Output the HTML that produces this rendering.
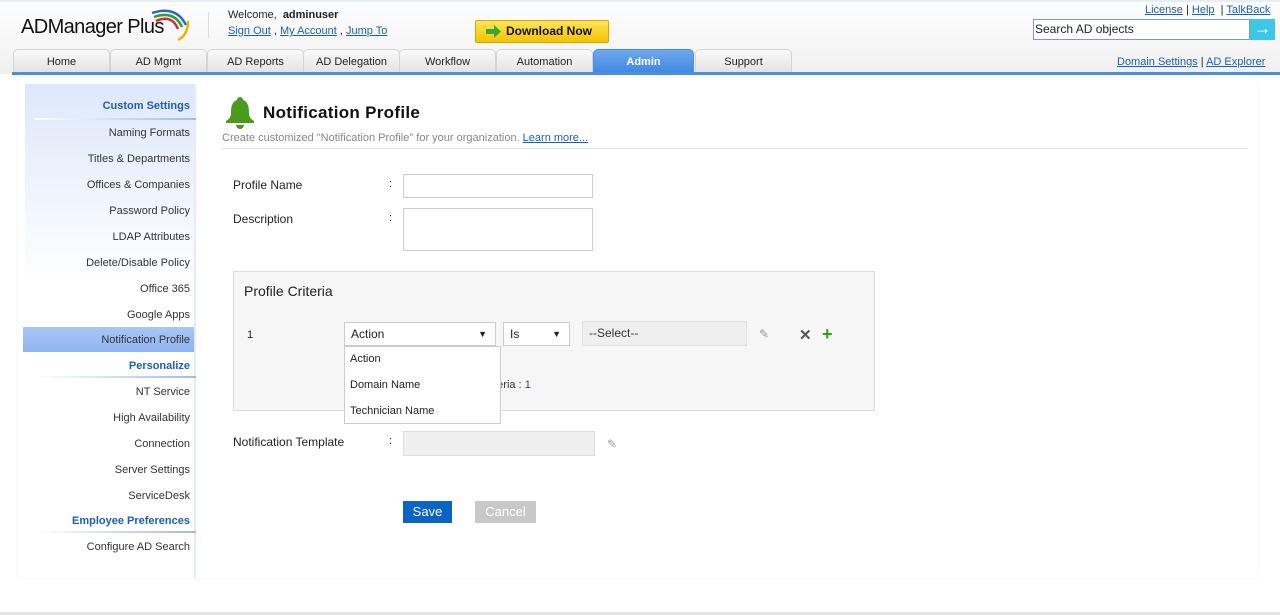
<!DOCTYPE html>
<html><head><meta charset="utf-8"><style>
*{margin:0;padding:0;box-sizing:border-box}
body{width:1280px;height:615px;overflow:hidden;background:#fff;font-family:"Liberation Sans",sans-serif;font-size:11px;color:#222;position:relative}
.a{position:absolute}
a{color:#1a5fb4;text-decoration:underline}
.hdr{left:0;top:0;width:1280px;height:74px;background:linear-gradient(#fff,#f0f0f0)}
.tab{position:absolute;top:49px;height:24px;width:97px;border:1px solid #d4d4d4;border-bottom:none;border-radius:5px 5px 0 0;background:linear-gradient(#fafafa,#e2e2e2);text-align:center;line-height:24px;font-size:11px;color:#222}
.side div{position:absolute;right:0;width:171px;text-align:right;padding-right:4px;font-size:11px;color:#333}
.side .h{color:#1f5fae;font-weight:bold}
.inp{position:absolute;border:1px solid #ccc;background:#fff}
</style></head><body>
<div class="a hdr"></div>
<div class="a" style="left:0;top:0;width:1280px;height:2px;background:#e8eef6"></div>
<div class="a" style="left:21px;top:16px;font-size:20px;color:#111;letter-spacing:-0.6px">ADManager Plus</div>
<svg class="a" style="left:146px;top:5px" width="46" height="38"><path d="M6 8 Q30 0 40 20" stroke="#2a66c9" stroke-width="2.5" fill="none"/><path d="M8 12 Q28 5 36 22" stroke="#2f9e3a" stroke-width="2.5" fill="none"/><path d="M10 16 Q26 9 32 24" stroke="#d32f2f" stroke-width="2.5" fill="none"/><path d="M42 16 Q42 30 32 35" stroke="#e8b400" stroke-width="2.5" fill="none"/></svg>
<div class="a" style="left:208px;top:12px;width:1px;height:26px;background:#ddd"></div>
<div class="a" style="left:228px;top:9px;font-size:11px">Welcome, &nbsp;<b>adminuser</b></div>
<div class="a" style="left:228px;top:25px;font-size:11px"><a>Sign Out</a> , <a>My Account</a> , <a>Jump To</a></div>
<div class="a" style="left:475px;top:20px;width:134px;height:23px;border:1px solid #d9a800;border-radius:2px;background:linear-gradient(#ffe45c,#f4c400);font-weight:bold;font-size:12px;line-height:21px;padding-left:30px;color:#111">Download Now</div>
<svg class="a" style="left:486px;top:25px" width="16" height="13"><path d="M0 4h8V0l7 6.5-7 6.5V9H0z" fill="#3aa635"/></svg>
<div class="a" style="left:1145px;top:4px;font-size:11px"><a>License</a> | <a>Help</a> &nbsp;| <a>TalkBack</a></div>
<div class="a" style="left:1033px;top:19px;width:217px;height:21px;border:1px solid #7a9bc9;background:#fff;font-size:12px;line-height:19px;padding-left:1px">Search AD objects</div>
<div class="a" style="left:1250px;top:19px;width:25px;height:21px;background:#3cc7e6;color:#fff;font-size:18px;line-height:19px;text-align:center">→</div>
<div class="tab" style="left:13px">Home</div>
<div class="tab" style="left:110px">AD Mgmt</div>
<div class="tab" style="left:207px">AD Reports</div>
<div class="tab" style="left:303px">AD Delegation</div>
<div class="tab" style="left:399px">Workflow</div>
<div class="tab" style="left:496px">Automation</div>
<div class="tab" style="left:593px;width:101px;background:linear-gradient(#6fa8ee,#3f87e0);color:#fff;font-weight:bold;border-color:#4a8ee0">Admin</div>
<div class="tab" style="left:695px">Support</div>
<div class="a" style="left:1117px;top:56px;font-size:11px"><a>Domain Settings</a> | <a>AD Explorer</a></div>
<div class="a" style="left:12px;top:72px;width:1268px;height:3px;background:#4a8ee0"></div>
<div class="a" style="left:18px;top:78px;width:1240px;height:500px;border-radius:6px;box-shadow:0 0 3px #eee"></div>
<div class="a side" style="left:25px;top:84px;width:171px;height:494px;background:linear-gradient(#dde8fb,#fff 200px);border-right:2px solid #e3ecf9">
<div class="h" style="top:16px">Custom Settings</div>
<div style="left:10px;top:34px;width:161px;height:2px;background:linear-gradient(90deg,#fff,#9cbde8);padding:0"></div>
<div style="top:43px">Naming Formats</div><div style="top:69px">Titles &amp; Departments</div><div style="top:95px">Offices &amp; Companies</div><div style="top:121px">Password Policy</div><div style="top:147px">LDAP Attributes</div><div style="top:173px">Delete/Disable Policy</div><div style="top:199px">Office 365</div><div style="top:225px">Google Apps</div>
<div style="top:243px;height:25px;line-height:26px;background:linear-gradient(#a9c6f5,#8fb4f0)">Notification Profile</div>
<div class="h" style="top:276px">Personalize</div>
<div style="left:10px;top:292px;width:161px;height:2px;background:linear-gradient(90deg,#fff,#9cbde8);padding:0"></div>
<div style="top:302px">NT Service</div><div style="top:328px">High Availability</div><div style="top:354px">Connection</div><div style="top:380px">Server Settings</div><div style="top:406px">ServiceDesk</div>
<div class="h" style="top:431px">Employee Preferences</div>
<div style="left:10px;top:447px;width:161px;height:2px;background:linear-gradient(90deg,#fff,#9cbde8);padding:0"></div>
<div style="top:457px">Configure AD Search</div>
</div>
<svg class="a" style="left:223px;top:95px" width="34" height="34"><path d="M17 2a3 3 0 0 1 3 3c6 2 6 9 6 14 0 3 2 5 5 7v2H3v-2c3-2 5-4 5-7 0-5 0-12 6-14a3 3 0 0 1 3-3z" fill="#4a9a1c"/><path d="M13 30a4 4 0 0 0 8 0z" fill="#4a9a1c"/></svg>
<div class="a" style="left:263px;top:103px;font-size:17px;font-weight:bold;color:#111;letter-spacing:0.3px">Notification Profile</div>
<div class="a" style="left:222px;top:132px;font-size:11px;color:#888">Create customized "Notification Profile" for your organization. <a>Learn more...</a></div>
<div class="a" style="left:222px;top:148px;width:1026px;height:1px;background:#e5e5e5"></div>
<div class="a" style="left:233px;top:178px;font-size:12px">Profile Name</div><div class="a" style="left:389px;top:178px">:</div>
<div class="inp" style="left:403px;top:174px;width:190px;height:24px"></div>
<div class="a" style="left:233px;top:212px;font-size:12px">Description</div><div class="a" style="left:389px;top:212px">:</div>
<div class="inp" style="left:403px;top:208px;width:190px;height:43px"></div>
<div class="a" style="left:233px;top:271px;width:642px;height:140px;background:#f6f6f6;border:1px solid #ddd"></div>
<div class="a" style="left:244px;top:283px;font-size:14px;color:#222">Profile Criteria</div>
<div class="a" style="left:247px;top:329px;font-size:11px">1</div>
<div class="inp" style="left:344px;top:322px;width:152px;height:24px;font-size:12px;line-height:22px;padding-left:6px">Action<span style="position:absolute;right:8px;font-size:9px">▼</span></div>
<div class="inp" style="left:503px;top:322px;width:67px;height:24px;font-size:12px;line-height:22px;padding-left:6px">Is<span style="position:absolute;right:8px;font-size:9px">▼</span></div>
<div class="a" style="left:582px;top:321px;width:165px;height:25px;background:#efefef;border:1px solid #e0e0e0;font-size:12px;line-height:23px;padding-left:6px;color:#333">--Select--</div>
<div class="a" style="left:759px;top:327px;color:#999;font-size:12px">✎</div>
<div class="a" style="left:799px;top:326px;color:#555;font-size:15px;font-weight:bold">✕</div>
<div class="a" style="left:822px;top:324px;color:#3a9a1c;font-size:18px;font-weight:bold">+</div>
<div class="a" style="left:488px;top:379px;font-size:11px;color:#333">riteria : <span style="color:#1a4f9a">1</span></div>
<div class="inp" style="left:344px;top:346px;width:157px;height:78px;font-size:11px">
<div style="position:absolute;left:5px;top:6px">Action</div><div style="position:absolute;left:5px;top:32px">Domain Name</div><div style="position:absolute;left:5px;top:58px">Technician Name</div></div>
<div class="a" style="left:233px;top:435px;font-size:12px">Notification Template</div><div class="a" style="left:389px;top:435px">:</div>
<div class="a" style="left:403px;top:431px;width:192px;height:25px;background:#efefef;border:1px solid #ddd"></div>
<div class="a" style="left:607px;top:437px;color:#999;font-size:12px">✎</div>
<div class="a" style="left:403px;top:501px;width:49px;height:22px;background:#0b63c4;color:#fff;font-size:13px;text-align:center;line-height:22px">Save</div>
<div class="a" style="left:475px;top:501px;width:61px;height:22px;background:#c8c8c8;color:#fff;font-size:13px;text-align:center;line-height:22px">Cancel</div>
<div class="a" style="left:0;top:612px;width:1280px;height:3px;background:#e5e5e5"></div>
</body></html>
